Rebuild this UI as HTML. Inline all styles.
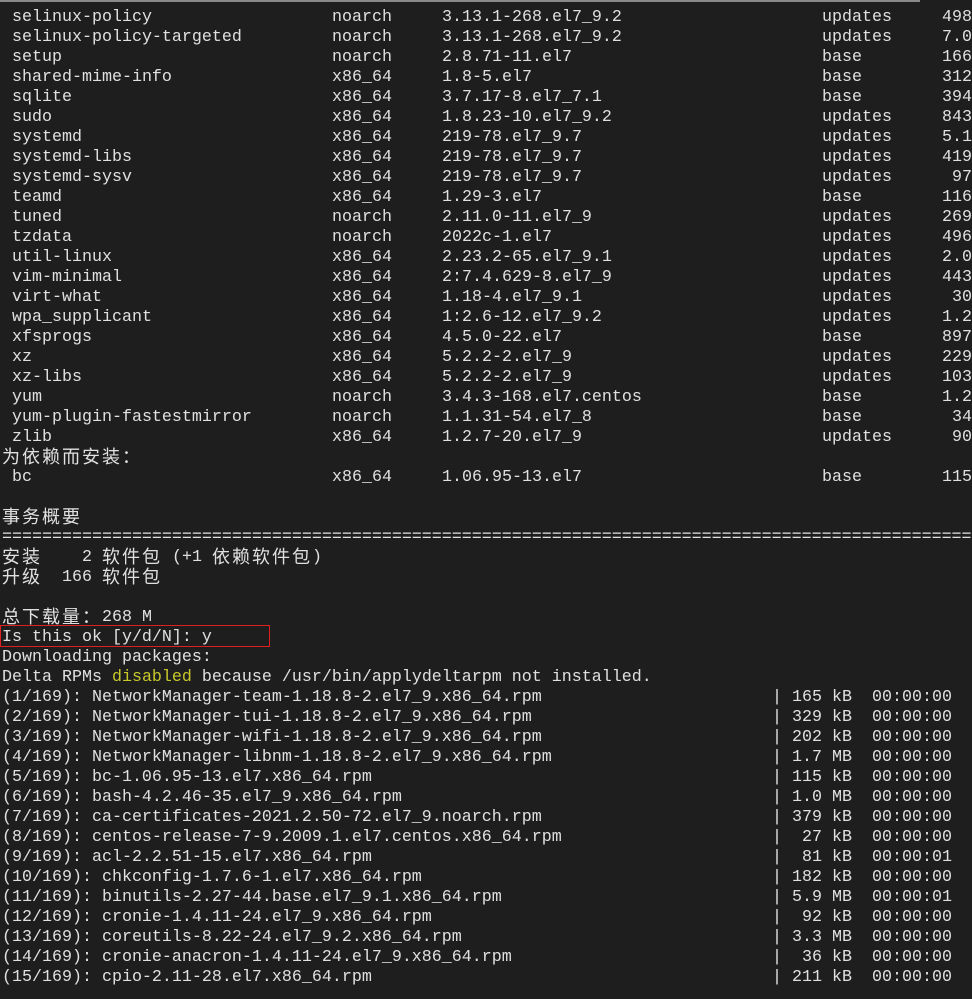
<!DOCTYPE html>
<html><head><meta charset="utf-8"><style>
html,body{margin:0;padding:0;background:#1e1e1e;width:972px;height:999px;overflow:hidden}
body{font-family:"Liberation Mono","Noto Sans CJK SC",monospace;font-size:16.67px;color:#e0e0e0;position:relative}
.r{position:absolute;left:0;height:20px;line-height:20px;width:972px;white-space:pre}
.r span{position:absolute;top:0;white-space:pre}
.r span.c{font-size:18px;letter-spacing:2px;font-family:"Noto Sans CJK SC","Liberation Mono",sans-serif;top:-2px}
.y{color:#c8c82a}
#top{position:absolute;left:0;top:0;width:920px;height:2px;background:#8a8a8a}
#box{position:absolute;left:0;top:625px;width:268px;height:20px;border:1px solid #e02020}
</style></head><body>
<div id="top"></div>
<div id="box"></div>
<div id="c"></div>
<script>
var pk=[["selinux-policy","noarch","3.13.1-268.el7_9.2","updates","498"],
["selinux-policy-targeted","noarch","3.13.1-268.el7_9.2","updates","7.0"],
["setup","noarch","2.8.71-11.el7","base","166"],
["shared-mime-info","x86_64","1.8-5.el7","base","312"],
["sqlite","x86_64","3.7.17-8.el7_7.1","base","394"],
["sudo","x86_64","1.8.23-10.el7_9.2","updates","843"],
["systemd","x86_64","219-78.el7_9.7","updates","5.1"],
["systemd-libs","x86_64","219-78.el7_9.7","updates","419"],
["systemd-sysv","x86_64","219-78.el7_9.7","updates"," 97"],
["teamd","x86_64","1.29-3.el7","base","116"],
["tuned","noarch","2.11.0-11.el7_9","updates","269"],
["tzdata","noarch","2022c-1.el7","updates","496"],
["util-linux","x86_64","2.23.2-65.el7_9.1","updates","2.0"],
["vim-minimal","x86_64","2:7.4.629-8.el7_9","updates","443"],
["virt-what","x86_64","1.18-4.el7_9.1","updates"," 30"],
["wpa_supplicant","x86_64","1:2.6-12.el7_9.2","updates","1.2"],
["xfsprogs","x86_64","4.5.0-22.el7","base","897"],
["xz","x86_64","5.2.2-2.el7_9","updates","229"],
["xz-libs","x86_64","5.2.2-2.el7_9","updates","103"],
["yum","noarch","3.4.3-168.el7.centos","base","1.2"],
["yum-plugin-fastestmirror","noarch","1.1.31-54.el7_8","base"," 34"],
["zlib","x86_64","1.2.7-20.el7_9","updates"," 90"]];
var dl=[["(1/169): NetworkManager-team-1.18.8-2.el7_9.x86_64.rpm","165 kB","00:00:00"],
["(2/169): NetworkManager-tui-1.18.8-2.el7_9.x86_64.rpm","329 kB","00:00:00"],
["(3/169): NetworkManager-wifi-1.18.8-2.el7_9.x86_64.rpm","202 kB","00:00:00"],
["(4/169): NetworkManager-libnm-1.18.8-2.el7_9.x86_64.rpm","1.7 MB","00:00:00"],
["(5/169): bc-1.06.95-13.el7.x86_64.rpm","115 kB","00:00:00"],
["(6/169): bash-4.2.46-35.el7_9.x86_64.rpm","1.0 MB","00:00:00"],
["(7/169): ca-certificates-2021.2.50-72.el7_9.noarch.rpm","379 kB","00:00:00"],
["(8/169): centos-release-7-9.2009.1.el7.centos.x86_64.rpm"," 27 kB","00:00:00"],
["(9/169): acl-2.2.51-15.el7.x86_64.rpm"," 81 kB","00:00:01"],
["(10/169): chkconfig-1.7.6-1.el7.x86_64.rpm","182 kB","00:00:00"],
["(11/169): binutils-2.27-44.base.el7_9.1.x86_64.rpm","5.9 MB","00:00:01"],
["(12/169): cronie-1.4.11-24.el7_9.x86_64.rpm"," 92 kB","00:00:00"],
["(13/169): coreutils-8.22-24.el7_9.2.x86_64.rpm","3.3 MB","00:00:00"],
["(14/169): cronie-anacron-1.4.11-24.el7_9.x86_64.rpm"," 36 kB","00:00:00"],
["(15/169): cpio-2.11-28.el7.x86_64.rpm","211 kB","00:00:00"]];
var h="",row=0;
function R(inner){h+='<div class="r" style="top:'+(8+row*20)+'px">'+inner+'</div>';row++;}
function S(x,t,cl){return '<span style="left:'+x+'px"'+(cl?' class="'+cl+'"':'')+'>'+t+'</span>';}
pk.forEach(function(p){R(S(12,p[0])+S(332,p[1])+S(442,p[2])+S(822,p[3])+S(942,p[4]));});
R(S(2,'为依赖而安装：','c'));
R(S(12,'bc')+S(332,'x86_64')+S(442,'1.06.95-13.el7')+S(822,'base')+S(942,'115'));
R('');
R(S(2,'事务概要','c'));
R(S(2,'='.repeat(100)));
R(S(2,'安装','c')+S(42,'    2 ')+S(102,'软件包','c')+S(162,' (+1 ')+S(212,'依赖软件包','c')+S(312,')'));
R(S(2,'升级','c')+S(42,'  166 ')+S(102,'软件包','c'));
R('');
R(S(2,'总下载量：','c')+S(102,'268 M'));
R(S(2,'Is this ok [y/d/N]: y'));
R(S(2,'Downloading packages:'));
R(S(2,'Delta RPMs <span class="y" style="position:static">disabled</span> because /usr/bin/applydeltarpm not installed.'));
dl.forEach(function(d){R(S(2,d[0])+S(772,'|')+S(792,d[1])+S(872,d[2]));});
document.getElementById('c').innerHTML=h;
</script>
</body></html>
